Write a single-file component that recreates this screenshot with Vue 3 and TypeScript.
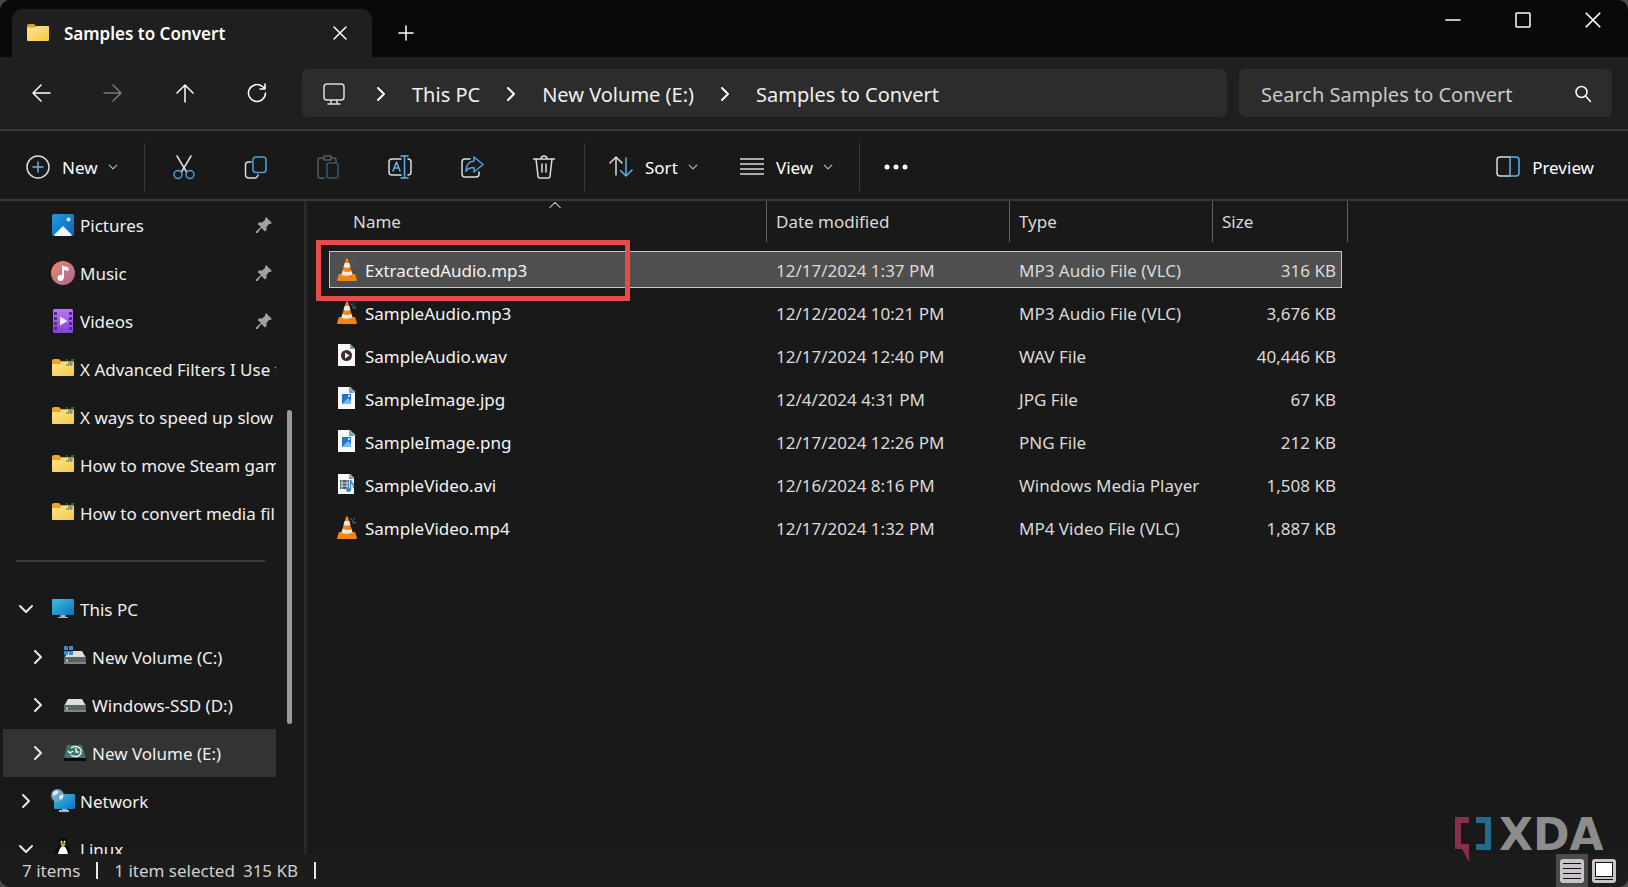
<script setup lang="ts">
import { ref } from 'vue'

interface PlaceItem {
  label: string
  icon: string
  pinned?: boolean
}

interface TreeItem {
  label: string
  icon: string
  open: boolean
  nested: boolean
}

interface FileItem {
  name: string
  icon: string
  modified: string
  type: string
  size: string
}

const crumbs: string[] = ['This PC', 'New Volume (E:)', 'Samples to Convert']

const places: PlaceItem[] = [
  { label: 'Pictures', icon: 'pictures', pinned: true },
  { label: 'Music', icon: 'music', pinned: true },
  { label: 'Videos', icon: 'videos', pinned: true },
  { label: 'X Advanced Filters I Use to', icon: 'folder-link' },
  { label: 'X ways to speed up slow', icon: 'folder-link' },
  { label: 'How to move Steam gam', icon: 'folder-link' },
  { label: 'How to convert media fil', icon: 'folder-link' },
]

const tree: TreeItem[] = [
  { label: 'This PC', icon: 'pc', open: true, nested: false },
  { label: 'New Volume (C:)', icon: 'drive-system', open: false, nested: true },
  { label: 'Windows-SSD (D:)', icon: 'drive', open: false, nested: true },
  { label: 'New Volume (E:)', icon: 'drive-history', open: false, nested: true },
  { label: 'Network', icon: 'network', open: false, nested: false },
  { label: 'Linux', icon: 'linux', open: true, nested: false },
]

const files: FileItem[] = [
  { name: 'ExtractedAudio.mp3', icon: 'vlc', modified: '12/17/2024 1:37 PM', type: 'MP3 Audio File (VLC)', size: '316 KB' },
  { name: 'SampleAudio.mp3', icon: 'vlc', modified: '12/12/2024 10:21 PM', type: 'MP3 Audio File (VLC)', size: '3,676 KB' },
  { name: 'SampleAudio.wav', icon: 'file-audio', modified: '12/17/2024 12:40 PM', type: 'WAV File', size: '40,446 KB' },
  { name: 'SampleImage.jpg', icon: 'file-image', modified: '12/4/2024 4:31 PM', type: 'JPG File', size: '67 KB' },
  { name: 'SampleImage.png', icon: 'file-image', modified: '12/17/2024 12:26 PM', type: 'PNG File', size: '212 KB' },
  { name: 'SampleVideo.avi', icon: 'file-video', modified: '12/16/2024 8:16 PM', type: 'Windows Media Player', size: '1,508 KB' },
  { name: 'SampleVideo.mp4', icon: 'vlc', modified: '12/17/2024 1:32 PM', type: 'MP4 Video File (VLC)', size: '1,887 KB' },
]

const tools: { id: string; label: string; disabled?: boolean }[] = [
  { id: 'cut', label: 'Cut' },
  { id: 'copy', label: 'Copy' },
  { id: 'paste', label: 'Paste', disabled: true },
  { id: 'rename', label: 'Rename' },
  { id: 'share', label: 'Share' },
  { id: 'trash', label: 'Delete' },
]

const selectedFile = ref('ExtractedAudio.mp3')
const currentPlace = ref('New Volume (E:)')
const query = ref('')
</script>

<template>
  <div class="window">
    <svg class="sprite" aria-hidden="true">
      <defs>
        <linearGradient id="g-folder" x1="0" y1="0" x2="1" y2="1">
          <stop offset="0" stop-color="#ffe694" /><stop offset="1" stop-color="#f6c945" />
        </linearGradient>
        <linearGradient id="g-pic" x1="0" y1="0" x2="1" y2="1">
          <stop offset="0" stop-color="#1f9be0" /><stop offset="1" stop-color="#0f62b4" />
        </linearGradient>
        <linearGradient id="g-music" x1="0" y1="0" x2="1" y2="1">
          <stop offset="0" stop-color="#ee8a62" /><stop offset="1" stop-color="#a8649c" />
        </linearGradient>
        <linearGradient id="g-video" x1="0" y1="0" x2="0" y2="1">
          <stop offset="0" stop-color="#b77bee" /><stop offset="1" stop-color="#8243d6" />
        </linearGradient>
        <linearGradient id="g-screen" x1="0" y1="0" x2="1" y2="1">
          <stop offset="0" stop-color="#35c2dc" /><stop offset="1" stop-color="#1470c4" />
        </linearGradient>
        <linearGradient id="g-cone" x1="0" y1="0" x2="1" y2="0">
          <stop offset="0" stop-color="#f39a24" /><stop offset="1" stop-color="#e8710a" />
        </linearGradient>
      </defs>

      <symbol id="folder" viewBox="0 0 24 24">
        <path d="M1 5q0-2 2-2h5l2 2h12q1 0 1 1v3H1z" fill="#e0a21c" />
        <path d="M1 6.500h8l2-1.500h11q1 0 1 1v13q0 1-1 1H2q-1 0-1-1z" fill="url(#g-folder)" />
      </symbol>
      <symbol id="folder-link" viewBox="0 0 24 24">
        <path d="M1 4q0-2 2-2h5l2 2h12q1 0 1 1v3H1z" fill="#f0a91e" />
        <path d="M1 7h8l2-2h11q1 0 1 1v12q0 1-1 1H2q-1 0-1-1z" fill="url(#g-folder)" />
        <path d="M15 2l6 6M21 2v6h-6M17 7l6-5" fill="none" stroke="#4d7b74" stroke-width="1" />
      </symbol>
      <symbol id="pictures" viewBox="0 0 24 24">
        <rect x="1" y="1" width="22" height="22" rx="2" fill="url(#g-pic)" />
        <path d="M3 22l9-9 9 9q-1 1-2 1H5q-1 0-2-1z" fill="#eef7fd" />
        <circle cx="17.500" cy="6.500" r="2" fill="#d8f0ff" />
      </symbol>
      <symbol id="music" viewBox="0 0 24 24">
        <circle cx="12" cy="12" r="12" fill="url(#g-music)" />
        <circle cx="9.500" cy="17" r="3" fill="#fff" />
        <path d="M11 17V4.500l6.500 2V10L13 9v8z" fill="#fff" />
      </symbol>
      <symbol id="videos" viewBox="0 0 24 24">
        <rect x="2" width="20" height="24" rx="1.500" fill="url(#g-video)" />
        <path d="M3 3h3v3H3zM3 8h3v3H3zM3 13h3v3H3zM3 18h3v3H3zM18 3h3v3h-3zM18 8h3v3h-3zM18 13h3v3h-3zM18 18h3v3h-3z" fill="#5a249c" />
        <path d="M9 7.500v9l7.500-4.500z" fill="#f4eaff" />
      </symbol>
      <symbol id="pin" viewBox="0 0 16 16">
        <path d="M10 0l6 6-2 1-1 0-2.500 3v3l-1.500 1.500-3.500-3.500L1.500 16 0 16v-1.500L5 10 1.500 7 3 5.500h3L9 3V2z" fill="#9ba3a7" />
      </symbol>
      <symbol id="pc" viewBox="0 0 24 24">
        <rect x="1" y="2" width="22" height="16" rx="1" fill="url(#g-screen)" />
        <path d="M9.500 18h5v2h2.500v1H7v-1h2.500z" fill="#aeb7bd" />
      </symbol>
      <symbol id="drive" viewBox="0 0 24 24">
        <path d="M5 6h14l4 7H1z" fill="#dedee0" />
        <rect x="1" y="12" width="22" height="7" rx="1" fill="#5d6163" />
        <path d="M1 18h22" stroke="#a0a3a4" />
        <rect x="3" y="14" width="2" height="3" fill="#6fdc83" />
      </symbol>
      <symbol id="drive-system" viewBox="0 0 24 24">
        <path d="M6 6h13l4 7H1z" fill="#dedee0" />
        <rect x="1" y="12" width="22" height="7" rx="1" fill="#5d6163" />
        <path d="M1 18h22" stroke="#a0a3a4" />
        <rect x="3" y="14" width="2" height="3" fill="#6fdc83" />
        <path d="M1 1h4v4H1zM6 1h4v4H6zM1 6h4v4H1zM6 6h4v4H6z" fill="#2b8ed8" />
      </symbol>
      <symbol id="drive-history" viewBox="0 0 24 24">
        <path d="M4 4h15l4 13H1z" fill="#3f7468" />
        <path d="M1 17h22v3H1z" fill="#080b0a" />
        <path d="M8 7a6 5 0 1 1 0 7M5 10l2 2 3-2M13 7v4h3" fill="none" stroke="#e4f1ec" stroke-width="1.500" />
      </symbol>
      <symbol id="network" viewBox="0 0 24 24">
        <rect x="3" y="5" width="21" height="15" rx="1" fill="url(#g-screen)" />
        <path d="M11 20h5v1h2v2H8v-2h3z" fill="#aeb7bd" />
        <circle cx="6.500" cy="6.500" r="6.500" fill="#6fa6c8" />
        <path d="M2 3q4-3 6 0l-3 3-3 1zM8 7l4-2v4l-3 2z" fill="#d6ebf4" />
      </symbol>
      <symbol id="linux" viewBox="0 0 24 24">
        <path d="M12 1q4 0 4 5 0 3 3 7 2 4 0 9H5q-2-5 0-9 3-4 3-7 0-5 4-5z" fill="#080808" />
        <path d="M12 9q3 0 5 8 1 4-5 6-6-2-5-6 2-8 5-8z" fill="#fff" />
        <ellipse cx="10.500" cy="5" rx="1" ry="1.500" fill="#ddd" />
        <ellipse cx="13.500" cy="5" rx="1" ry="1.500" fill="#ddd" />
        <path d="M9 7.500l3-1.500 3 1.500-3 2.500z" fill="#d8a431" />
      </symbol>

      <symbol id="vlc" viewBox="0 0 22 24">
        <path d="M3 17h16l2 6q0 1-1 1H2q-1 0-1-1z" fill="#f0860f" />
        <path d="M10 2q1-1.500 2 0l5 17q-6 3-12 0z" fill="url(#g-cone)" />
        <path d="M8.700 6h4.600l1.200 4q-3.500 1.500-7 0zM6.500 14q4.500 2 9 0l1 3.500q-5.500 2.500-11 0z" fill="#efe9e2" />
        <path d="M14 3l6 6M18 3v2M16 8l4-1" fill="none" stroke="#3f6680" stroke-width="1" />
      </symbol>
      <symbol id="file-audio" viewBox="0 0 22 24">
        <path d="M2 1h12l5 5v17H2z" fill="#fafafa" />
        <path d="M14 1l5 5h-5z" fill="#6e9fba" />
        <circle cx="10.500" cy="12.500" r="5.500" fill="#3a2a35" />
        <path d="M9 9.500v6l4.500-3z" fill="#fff" />
      </symbol>
      <symbol id="file-image" viewBox="0 0 22 24">
        <path d="M2 1h12l5 5v17H2z" fill="#fafafa" />
        <path d="M13 1l6 6h-6z" fill="#77a3b3" />
        <path d="M15 2l5 4" stroke="#35617a" />
        <rect x="6" y="8" width="9" height="10" fill="#2474cf" />
        <path d="M6 18l6-6 3 3v3z" fill="#7cb8ee" />
        <circle cx="13" cy="10" r="1" fill="#fff" />
      </symbol>
      <symbol id="file-video" viewBox="0 0 22 24">
        <path d="M2 2h12l4 4v16H2z" fill="#fafafa" />
        <path d="M13 2l5 5h-5z" fill="#77a3b3" />
        <path d="M4 8h9v9H4z" fill="#4a5b66" />
        <path d="M6 8v9M11 8v9M4 11h9M4 14h9" stroke="#d2dde3" stroke-width="1" />
        <ellipse cx="12.500" cy="18" rx="2.500" ry="2" fill="#2a8fc6" />
        <path d="M14.500 18V8q1 3 3 5v3" fill="none" stroke="#2a8fc6" stroke-width="1.500" />
      </symbol>

      <symbol id="arrow-left" viewBox="0 0 20 20"><path d="M19 10H2M10 2l-8 8 8 8" /></symbol>
      <symbol id="arrow-right" viewBox="0 0 20 20"><path d="M1 10h17M10 2l8 8-8 8" /></symbol>
      <symbol id="arrow-up" viewBox="0 0 20 20"><path d="M10 19V2M2 10l8-8 8 8" /></symbol>
      <symbol id="refresh" viewBox="0 0 20 20"><path d="M18.500 10A8.500 8.500 0 1 1 15.500 3.500L18 5.500M18 1v5h-5" /></symbol>
      <symbol id="close" viewBox="0 0 16 16"><path d="M2 2l12 12M14 2L2 14" /></symbol>
      <symbol id="plus" viewBox="0 0 16 16"><path d="M8 1v14M1 8h14" /></symbol>
      <symbol id="minimize" viewBox="0 0 16 16"><path d="M1 8h14" /></symbol>
      <symbol id="maximize" viewBox="0 0 16 16"><rect x="1" y="1" width="14" height="14" rx="1" /></symbol>
      <symbol id="chevron-right" viewBox="0 0 16 16"><path d="M5 2l6 6-6 6" /></symbol>
      <symbol id="chevron-down" viewBox="0 0 16 16"><path d="M2 5l6 6 6-6" /></symbol>
      <symbol id="chevron-up" viewBox="0 0 16 16"><path d="M2 11l6-6 6 6" /></symbol>
      <symbol id="monitor" viewBox="0 0 24 24">
        <rect x="2" y="2" width="20" height="16" rx="3" /><path d="M9 18v4M15 18v4M6 22h12" />
      </symbol>
      <symbol id="search" viewBox="0 0 18 18"><circle cx="7.500" cy="7" r="5.500" /><path d="M11.500 11l5 5.500" /></symbol>

      <symbol id="new" viewBox="0 0 24 24"><circle cx="12" cy="12" r="11" /><path d="M12 7v10M7 12h10" stroke="#5fb2e6" /></symbol>
      <symbol id="cut" viewBox="0 0 24 24">
        <path d="M5 1l9.500 16M19 1L9.500 17" />
        <circle cx="6" cy="19.500" r="4" stroke="#4ba3dc" /><circle cx="18" cy="19.500" r="4" stroke="#4ba3dc" />
      </symbol>
      <symbol id="copy" viewBox="0 0 24 24">
        <path d="M7 7H4.500Q1.500 7 1.500 10v9.500Q1.500 23 5 23h5.500q3 0 3.500-3" />
        <rect x="9" y="2" width="13" height="15.500" rx="3" stroke="#4ba3dc" />
      </symbol>
      <symbol id="paste" viewBox="0 0 24 24">
        <path d="M8 3H4Q2 3 2 5v16q0 2 2 2h4M16 3h2q2 0 2 2v2M8 1h7v4H8z" stroke="#5b5b5b" />
        <rect x="11" y="8" width="11" height="15" rx="2" stroke="#2d5a72" />
      </symbol>
      <symbol id="rename" viewBox="0 0 24 24">
        <path d="M13 4H4Q1 4 1 7v10q0 3 3 3h9M20 4q3 0 3 3v10q0 3-3 3" />
        <path d="M13 1h7M13 23h7M16.500 1v22M5 16l3.500-9L12 16M6 13h5" stroke="#5fb2e6" />
      </symbol>
      <symbol id="share" viewBox="0 0 24 24">
        <path d="M10 4H5Q2 4 2 7v12q0 3 3 3h11q3 0 3-3v-2" />
        <path d="M14 2l9 7.500-9 7.500v-4.500q-6 0-8 4 0-10 8-10.500z" stroke="#4ba3dc" />
      </symbol>
      <symbol id="trash" viewBox="0 0 24 24">
        <path d="M1.500 4h21M4 4l2 17q0 2 2 2h8q2 0 2-2l2-17M9 4q0-3 3-3t3 3M10 9v8M14 9v8" />
      </symbol>
      <symbol id="sort" viewBox="0 0 24 24">
        <path d="M7 20V2M1 8l6-6 6 6" /><path d="M17 3v18M11.500 15.500l5.500 5.500 6-6" stroke="#5fb2e6" />
      </symbol>
      <symbol id="view" viewBox="0 0 24 24"><path d="M0 4h24M0 9h24M0 14h24M0 19h24" /></symbol>
      <symbol id="more" viewBox="0 0 24 24">
        <g fill="#fff" stroke="none"><circle cx="3" cy="12" r="2.500" /><circle cx="12" cy="12" r="2.500" /><circle cx="21" cy="12" r="2.500" /></g>
      </symbol>
      <symbol id="preview" viewBox="0 0 24 24">
        <path d="M14 2H4Q1 2 1 5v13q0 3 3 3h10" /><path d="M14 2h6q3 0 3 3v13q0 3-3 3h-6z" stroke="#5fb2e6" />
      </symbol>
      <symbol id="details" viewBox="0 0 24 24">
        <rect width="24" height="24" rx="3" fill="#c9c2c8" /><path d="M3 4.500h18M3 9.500h18M3 14.500h18M3 19.500h18" stroke="#111" stroke-width="1" />
      </symbol>
      <symbol id="thumbs" viewBox="0 0 24 24">
        <rect width="24" height="24" rx="3" fill="#c9c2c8" />
        <rect x="3.500" y="3.500" width="17" height="14" fill="#fff" stroke="#111" stroke-width="1" /><path d="M3 20.500h18" stroke="#111" stroke-width="1" />
      </symbol>
    </svg>

    <header class="titlebar">
      <div class="tab">
        <svg class="icon24"><use href="#folder" /></svg>
        <span class="tab-title">Samples to Convert</span>
        <button class="bare tab-close" aria-label="Close tab"><svg class="line icon16"><use href="#close" /></svg></button>
      </div>
      <button class="bare new-tab" aria-label="New tab"><svg class="line icon16"><use href="#plus" /></svg></button>
      <div class="caption">
        <button class="bare" aria-label="Minimize"><svg class="line icon16"><use href="#minimize" /></svg></button>
        <button class="bare" aria-label="Maximize"><svg class="line icon16"><use href="#maximize" /></svg></button>
        <button class="bare" aria-label="Close"><svg class="line icon18"><use href="#close" /></svg></button>
      </div>
    </header>

    <div class="navbar">
      <div class="history">
        <button class="bare" aria-label="Back"><svg class="line icon20"><use href="#arrow-left" /></svg></button>
        <button class="bare" aria-label="Forward" disabled><svg class="line icon20"><use href="#arrow-right" /></svg></button>
        <button class="bare" aria-label="Up"><svg class="line icon20"><use href="#arrow-up" /></svg></button>
        <button class="bare" aria-label="Refresh"><svg class="line icon20"><use href="#refresh" /></svg></button>
      </div>
      <nav class="address" aria-label="Address">
        <svg class="line soft root-icon icon24"><use href="#monitor" /></svg>
        <template v-for="crumb in crumbs" :key="crumb">
          <svg class="line crumb-arrow icon16"><use href="#chevron-right" /></svg>
          <a href="#" class="crumb">{{ crumb }}</a>
        </template>
      </nav>
      <label class="search">
        <input v-model="query" type="text" placeholder="Search Samples to Convert" aria-label="Search Samples to Convert" />
        <svg class="line icon18"><use href="#search" /></svg>
      </label>
    </div>

    <div class="toolbar">
      <button class="bare labelled new-button">
        <svg class="line soft icon24"><use href="#new" /></svg>New<svg class="line faint icon10"><use href="#chevron-down" /></svg>
      </button>
      <span class="rule"></span>
      <div class="tools">
        <button v-for="tool in tools" :key="tool.id" class="bare" :aria-label="tool.label" :disabled="tool.disabled">
          <svg class="line soft icon24"><use :href="'#' + tool.id" /></svg>
        </button>
      </div>
      <span class="rule"></span>
      <button class="bare labelled sort-button">
        <svg class="line soft icon24"><use href="#sort" /></svg>Sort<svg class="line faint icon10"><use href="#chevron-down" /></svg>
      </button>
      <button class="bare labelled view-button">
        <svg class="line soft icon24"><use href="#view" /></svg>View<svg class="line faint icon10"><use href="#chevron-down" /></svg>
      </button>
      <span class="rule"></span>
      <button class="bare more-button" aria-label="See more"><svg class="line icon24"><use href="#more" /></svg></button>
      <button class="bare labelled preview-button"><svg class="line soft icon24"><use href="#preview" /></svg>Preview</button>
    </div>

    <div class="body">
      <aside class="sidebar">
        <nav class="places" aria-label="Folders">
          <a v-for="place in places" :key="place.label" href="#" class="place">
            <svg class="icon24"><use :href="'#' + place.icon" /></svg>
            <span class="place-label">{{ place.label }}</span>
            <svg v-if="place.pinned" class="pin icon16"><use href="#pin" /></svg>
          </a>
          <hr class="divider" />
          <div
            v-for="node in tree"
            :key="node.label"
            class="node"
            :class="{ nested: node.nested, current: node.label === currentPlace }"
          >
            <button class="bare twist" :aria-label="(node.open ? 'Collapse ' : 'Expand ') + node.label">
              <svg class="line thick icon16"><use :href="node.open ? '#chevron-down' : '#chevron-right'" /></svg>
            </button>
            <a href="#" class="node-link" @click.prevent="currentPlace = node.label">
              <svg class="icon24"><use :href="'#' + node.icon" /></svg>
              <span class="place-label">{{ node.label }}</span>
            </a>
          </div>
        </nav>
        <div class="track"><span class="thumb"></span></div>
      </aside>

      <main class="content">
        <table class="files">
          <colgroup>
            <col class="col-name" /><col class="col-date" /><col class="col-type" /><col class="col-size" />
          </colgroup>
          <thead>
            <tr>
              <th>
                <button class="bare head head-name">Name<svg class="line faint sort-caret icon14"><use href="#chevron-up" /></svg></button>
              </th>
              <th><button class="bare head">Date modified</button></th>
              <th><button class="bare head">Type</button></th>
              <th><button class="bare head head-size">Size</button></th>
            </tr>
          </thead>
          <tbody>
            <tr
              v-for="(file, index) in files"
              :key="file.name"
              :class="{ selected: file.name === selectedFile }"
              @click="selectedFile = file.name"
            >
              <td class="name">
                <span class="name-cell"><svg class="file-icon"><use :href="'#' + file.icon" /></svg>{{ file.name }}</span>
                <span v-if="index === 0" class="callout"></span>
              </td>
              <td>{{ file.modified }}</td>
              <td>{{ file.type }}</td>
              <td class="size">{{ file.size }}</td>
            </tr>
          </tbody>
        </table>
      </main>

      <svg class="brand" viewBox="0 0 156 48" role="img" aria-label="XDA">
        <path d="M2 4h14v6H8v21h8v18L9 36H2z" fill="#86304a" />
        <path d="M23 4h15v33H23v-6h9V10h-9z" fill="#246a8c" />
        <text x="46" y="37">XDA</text>
      </svg>
    </div>

    <footer class="status">
      <span>7 items</span>
      <span class="bar"></span>
      <span>1 item selected</span>
      <span class="total">315 KB</span>
      <span class="bar"></span>
      <div class="modes">
        <button class="bare mode active" aria-label="Details view"><svg class="icon24"><use href="#details" /></svg></button>
        <button class="bare mode" aria-label="Thumbnail view"><svg class="icon24"><use href="#thumbs" /></svg></button>
      </div>
    </footer>
  </div>
</template>

<style>
html,
body {
  margin: 0;
  background: #4a4a4a;
}
</style>

<style scoped>
.window {
  display: flex;
  flex-direction: column;
  height: 100vh;
  box-sizing: border-box;
  overflow: hidden;
  border-radius: 10px;
  background: #191919;
  color: #f0f0f0;
  font-family: 'Segoe UI', 'Noto Sans', 'Open Sans', sans-serif;
  font-size: 17px;
}
.sprite {
  position: absolute;
  width: 0;
  height: 0;
}
svg {
  flex: none;
  display: block;
}
.icon10 { width: 10px; height: 10px; }
.icon14 { width: 14px; height: 14px; }
.icon16 { width: 16px; height: 16px; }
.icon18 { width: 18px; height: 18px; }
.icon20 { width: 20px; height: 20px; }
.icon24 { width: 24px; height: 24px; }
.line {
  fill: none;
  stroke: #fff;
  stroke-width: 1.500;
  stroke-linecap: round;
  stroke-linejoin: round;
}
.soft { stroke: #dcdcdc; }
.faint { stroke: #b4b4b4; }
.thick { stroke: #e8e8e8; stroke-width: 2; }
.icon10.line { stroke-width: 2; }
.bare {
  display: flex;
  align-items: center;
  justify-content: center;
  margin: 0;
  padding: 0;
  border: 0;
  background: none;
  color: inherit;
  font: inherit;
}
a {
  color: inherit;
  text-decoration: none;
}

.titlebar {
  display: flex;
  flex: none;
  height: 57px;
  background: #090909;
}
.tab {
  display: flex;
  align-items: center;
  box-sizing: border-box;
  width: 360px;
  margin: 9px 0 0 12px;
  padding: 0 20px 0 14px;
  border-radius: 10px 10px 0 0;
  background: #1f1f1f;
}
.tab-title {
  flex: 1;
  margin-left: 14px;
  color: #fff;
  font-weight: 600;
}
.tab-close {
  width: 24px;
  height: 24px;
}
.new-tab {
  width: 68px;
  margin-top: 9px;
}
.caption {
  display: flex;
  height: 40px;
  margin-left: auto;
}
.caption button {
  width: 70px;
}

.navbar {
  display: flex;
  flex: none;
  align-items: center;
  gap: 12px;
  height: 72px;
  padding-right: 16px;
  border-bottom: 2px solid #383838;
  background: #1f1f1f;
}
.history {
  display: flex;
  margin: 0 -3px 0 5px;
}
.history button {
  width: 72px;
  height: 48px;
}
.history button:disabled {
  opacity: 0.400;
}
.address {
  display: flex;
  flex: 1;
  align-items: center;
  box-sizing: border-box;
  height: 48px;
  padding: 2px 0 0 20px;
  border-radius: 6px;
  background: #2c2c2c;
  font-size: 20px;
}
.root-icon {
  margin-right: 4px;
}
.crumb-arrow {
  margin: 0 23px;
  stroke-width: 2;
}
.search {
  display: flex;
  align-items: center;
  box-sizing: border-box;
  width: 373px;
  height: 48px;
  padding: 2px 20px 0 22px;
  border-radius: 6px;
  background: #2c2c2c;
}
.search input {
  flex: 1;
  min-width: 0;
  padding: 0;
  border: 0;
  outline: 0;
  background: none;
  color: #fff;
  font: inherit;
  font-size: 20px;
}
.search input::placeholder {
  color: #c8c8c8;
  opacity: 1;
}

.toolbar {
  display: flex;
  flex: none;
  align-items: center;
  box-sizing: border-box;
  height: 70px;
  padding-top: 4px;
  border-bottom: 2px solid #383838;
  color: #fff;
}
.labelled {
  justify-content: flex-start;
  gap: 12px;
}
.labelled .icon10 {
  margin-left: -2px;
}
.new-button { width: 118px; margin-left: 26px; }
.sort-button { width: 131px; margin-left: 24px; }
.view-button { width: 119px; }
.more-button { width: 72px; height: 48px; }
.preview-button { margin: 0 34px 0 auto; }
.rule {
  flex: none;
  width: 1px;
  height: 48px;
  background: #3a3a3a;
}
.tools {
  display: flex;
  margin: 0 4px 0 3px;
}
.tools button {
  width: 72px;
  height: 48px;
}

.body {
  position: relative;
  display: flex;
  flex: 1;
  min-height: 0;
}
.sidebar {
  display: flex;
  flex: none;
  box-sizing: border-box;
  width: 307px;
  overflow: hidden;
  border-right: 3px solid #292929;
}
.places {
  box-sizing: border-box;
  width: 276px;
  padding-left: 3px;
}
.place,
.node {
  display: flex;
  align-items: center;
  height: 48px;
}
.place {
  padding-left: 48px;
}
.place-label {
  flex: 1;
  min-width: 0;
  margin-left: 5px;
  overflow: hidden;
  white-space: nowrap;
}
.pin {
  margin-right: 4px;
}
.divider {
  height: 2px;
  margin: 23px 11px 23px 13px;
  border: 0;
  background: #383838;
}
.twist {
  width: 48px;
  height: 48px;
  padding-right: 3px;
  box-sizing: border-box;
}
.node.nested {
  padding-left: 12px;
}
.node.current {
  background: #333;
}
.node-link {
  display: flex;
  flex: 1;
  align-items: center;
  min-width: 0;
}
.track {
  display: flex;
  box-sizing: border-box;
  width: 5px;
  height: 100%;
  padding: 209px 0 130px;
  margin-left: 11px;
}
.thumb {
  flex: 1;
  border-radius: 3px;
  background: #9b9b9b;
}

.content {
  flex: 1;
  min-width: 0;
  padding-left: 22px;
}
.files {
  width: 1013px;
  margin-top: -6px;
  border-collapse: separate;
  border-spacing: 0 6px;
  table-layout: fixed;
  color: #dadada;
}
.col-name { width: 438px; }
.col-date { width: 243px; }
.col-type { width: 203px; }
.col-size { width: 129px; }
th {
  height: 44px;
  padding: 0;
  font-weight: 400;
  text-align: left;
  vertical-align: top;
}
.head {
  position: relative;
  justify-content: flex-start;
  box-sizing: border-box;
  width: 100%;
  height: 41px;
  padding: 0 0 0 9px;
  border-right: 1px solid #606060;
}
.head-name {
  padding-left: 24px;
}
.head-size {
  width: 135px;
}
.sort-caret {
  position: absolute;
  top: -3px;
  left: 219px;
}
td {
  box-sizing: border-box;
  height: 37px;
  padding: 2px 0 0 9px;
  border: 0 solid #c4c8c8;
  white-space: nowrap;
}
td.name {
  position: relative;
  padding-left: 7px;
  color: #f4f4f4;
}
.name-cell {
  display: flex;
  align-items: center;
  gap: 7px;
}
.file-icon {
  width: 22px;
  height: 24px;
  margin-bottom: 4px;
}
td.size {
  padding-right: 6px;
  text-align: right;
}
.selected td {
  border-width: 1px 0;
  background: #4f4f4f;
}
.selected td.name {
  padding-left: 6px;
  border-left-width: 1px;
}
.selected td.size {
  padding-right: 5px;
  border-right-width: 1px;
}
.callout {
  position: absolute;
  top: -12px;
  left: -14px;
  box-sizing: border-box;
  width: 314px;
  height: 61px;
  border: 5px solid #e84c4a;
  pointer-events: none;
}

.brand {
  position: absolute;
  right: 19px;
  bottom: -7px;
  z-index: 1;
  width: 156px;
  height: 48px;
}
.brand text {
  fill: #8c8c8c;
  font-family: 'DejaVu Sans', sans-serif;
  font-size: 44px;
  font-weight: 700;
}

.status {
  display: flex;
  flex: none;
  align-items: center;
  height: 33px;
  padding: 0 8px 0 22px;
  background: #1c1c1c;
  color: #cfcfcf;
}
.bar {
  width: 2px;
  height: 17px;
  margin: 0 16px;
  background: #e8e8e8;
}
.total {
  margin-left: 8px;
}
.modes {
  display: flex;
  align-self: stretch;
  margin-left: auto;
}
.mode {
  width: 32px;
}
.mode.active {
  background: #4b4b4b;
}
</style>
